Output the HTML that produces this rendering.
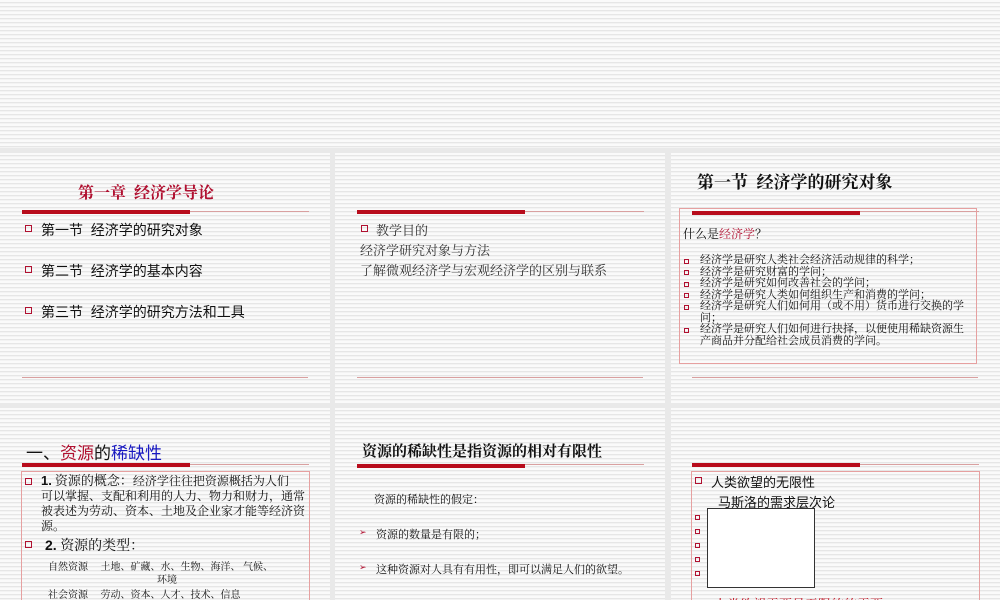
<!DOCTYPE html>
<html><head><meta charset="utf-8"><style>
*{margin:0;padding:0;box-sizing:border-box}
html,body{width:1000px;height:600px;overflow:hidden}
body{background:#e9e9e9;position:relative;font-family:"Liberation Serif","Noto Serif CJK SC",serif;color:#111}
.s{position:absolute;background:repeating-linear-gradient(180deg,#fafafa 0,#fafafa 2px,#e6e6e6 2px,#e6e6e6 3px,#f3f3f3 3px,#f3f3f3 4px)}
.a{position:absolute;white-space:nowrap}
.bar{position:absolute;height:4px;background:#b80c1c}
.thin{position:absolute;height:1px;background:#d9a0a0}
.bx{position:absolute;border:1px solid #e6a0a0}
.b{position:absolute;width:7px;height:7px;border:1.3px solid #b01030}
.sb{position:absolute;width:5px;height:5px;border:1px solid #b01030}
.sans{font-family:"Liberation Sans","Noto Sans CJK SC",sans-serif}
</style></head><body>
<div class="s" style="left:0;top:0;width:1000px;height:148px"></div>
<div class="s" style="left:0;top:153px;width:330px;height:250px"></div>
<div class="s" style="left:335px;top:153px;width:330px;height:250px"></div>
<div class="s" style="left:671px;top:153px;width:329px;height:250px"></div>
<div class="s" style="left:0;top:408px;width:330px;height:192px"></div>
<div class="s" style="left:335px;top:408px;width:330px;height:192px"></div>
<div class="s" style="left:671px;top:408px;width:329px;height:192px"></div>

<!-- slide 1 -->
<div class="a" style="left:78px;top:180px;font-size:16px;font-weight:bold;color:#b01030">第一章&nbsp; 经济学导论</div>
<div class="thin" style="left:22px;top:211px;width:287px"></div>
<div class="bar" style="left:22px;top:210px;width:168px"></div>
<div class="b" style="left:25px;top:225px"></div>
<div class="a sans" style="left:41px;top:220px;font-size:14px">第一节&nbsp; 经济学的研究对象</div>
<div class="b" style="left:25px;top:266px"></div>
<div class="a sans" style="left:41px;top:261px;font-size:14px">第二节&nbsp; 经济学的基本内容</div>
<div class="b" style="left:25px;top:307px"></div>
<div class="a sans" style="left:41px;top:302px;font-size:14px">第三节&nbsp; 经济学的研究方法和工具</div>
<div class="thin" style="left:22px;top:377px;width:286px"></div>

<!-- slide 2 -->
<div class="thin" style="left:357px;top:211px;width:287px"></div>
<div class="bar" style="left:357px;top:210px;width:168px"></div>
<div class="b" style="left:361px;top:225px"></div>
<div class="a" style="left:376px;top:220px;font-size:13px;color:#333">教学目的</div>
<div class="a" style="left:360px;top:240px;font-size:13px;color:#333">经济学研究对象与方法</div>
<div class="a" style="left:360px;top:260px;font-size:13px;color:#333">了解微观经济学与宏观经济学的区别与联系</div>
<div class="thin" style="left:357px;top:377px;width:286px"></div>

<!-- slide 3 -->
<div class="a" style="left:697px;top:168px;font-size:17px;font-weight:bold">第一节&nbsp; 经济学的研究对象</div>
<div class="thin" style="left:692px;top:211px;width:287px"></div>
<div class="bx" style="left:679px;top:208px;width:298px;height:156px"></div>
<div class="bar" style="left:692px;top:211px;width:168px"></div>
<div class="a" style="left:683px;top:225px;font-size:12px">什么是<span style="color:#b01030">经济学</span>？</div>
<div style="position:absolute;left:700px;top:255px;font-size:11px;line-height:11.5px;width:266px">
经济学是研究人类社会经济活动规律的科学；<br>经济学是研究财富的学问；<br>经济学是研究如何改善社会的学问；<br>经济学是研究人类如何组织生产和消费的学问；<br>经济学是研究人们如何用（或不用）货币进行交换的学问；<br>经济学是研究人们如何进行抉择，以便使用稀缺资源生产商品并分配给社会成员消费的学问。</div>
<div class="sb" style="left:684px;top:259px"></div>
<div class="sb" style="left:684px;top:270px"></div>
<div class="sb" style="left:684px;top:282px"></div>
<div class="sb" style="left:684px;top:293px"></div>
<div class="sb" style="left:684px;top:305px"></div>
<div class="sb" style="left:684px;top:328px"></div>
<div class="thin" style="left:692px;top:377px;width:286px"></div>

<!-- slide 4 -->
<div class="a sans" style="left:26px;top:439px;font-size:17px">一、<span style="color:#b01030">资源</span>的<span style="color:#1818c0">稀缺性</span></div>
<div class="thin" style="left:22px;top:464px;width:287px"></div>
<div class="bar" style="left:22px;top:463px;width:168px"></div>
<div class="bx" style="left:21px;top:471px;width:289px;height:140px"></div>
<div class="b" style="left:25px;top:478px"></div>
<div style="position:absolute;left:41px;top:473px;white-space:nowrap;font-size:12px;line-height:15px"><b class="sans" style="font-size:13px">1.</b> <span style="font-size:13px">资源的概念：</span>经济学往往把资源概括为人们<br>可以掌握、支配和利用的人力、物力和财力，通常<br>被表述为劳动、资本、土地及企业家才能等经济资<br>源。</div>
<div class="b" style="left:25px;top:541px"></div>
<div class="a" style="left:45px;top:535px;font-size:14px"><b class="sans">2.</b> 资源的类型：</div>
<div class="a" style="left:48px;top:558px;font-size:10px">自然资源&nbsp;&nbsp;&nbsp;&nbsp; 土地、矿藏、水、生物、海洋、 气候、</div>
<div class="a" style="left:157px;top:571px;font-size:10px">环境</div>
<div class="a" style="left:48px;top:586px;font-size:10px">社会资源&nbsp;&nbsp;&nbsp;&nbsp; 劳动、资本、人才、技术、信息</div>

<!-- slide 5 -->
<div class="a" style="left:362px;top:440px;font-size:15px;font-weight:bold">资源的稀缺性是指资源的相对有限性</div>
<div class="thin" style="left:357px;top:464px;width:287px"></div>
<div class="bar" style="left:357px;top:464px;width:168px"></div>
<div class="a" style="left:374px;top:491px;font-size:11px">资源的稀缺性的假定：</div>
<div class="a" style="left:359px;top:527px;font-size:9px;color:#b01030">➢</div>
<div class="a" style="left:376px;top:526px;font-size:11px">资源的数量是有限的；</div>
<div class="a" style="left:359px;top:562px;font-size:9px;color:#b01030">➢</div>
<div class="a" style="left:376px;top:561px;font-size:11px">这种资源对人具有有用性，即可以满足人们的欲望。</div>

<!-- slide 6 -->
<div class="thin" style="left:692px;top:464px;width:287px"></div>
<div class="bar" style="left:692px;top:463px;width:168px"></div>
<div class="bx" style="left:691px;top:471px;width:289px;height:140px"></div>
<div class="b" style="left:695px;top:477px"></div>
<div class="a sans" style="left:711px;top:472px;font-size:13px">人类欲望的无限性</div>
<div class="a sans" style="left:718px;top:492px;font-size:13px">马斯洛的需求层次论</div>
<div class="sb" style="left:695px;top:515px"></div>
<div class="sb" style="left:695px;top:529px"></div>
<div class="sb" style="left:695px;top:543px"></div>
<div class="sb" style="left:695px;top:557px"></div>
<div class="sb" style="left:695px;top:571px"></div>
<div style="position:absolute;left:707px;top:508px;width:108px;height:80px;background:#fff;border:1px solid #333"></div>
<div class="a" style="left:714px;top:594px;font-size:13px;color:#c01020">人类欲望需要是无限的的需要</div>
</body></html>
